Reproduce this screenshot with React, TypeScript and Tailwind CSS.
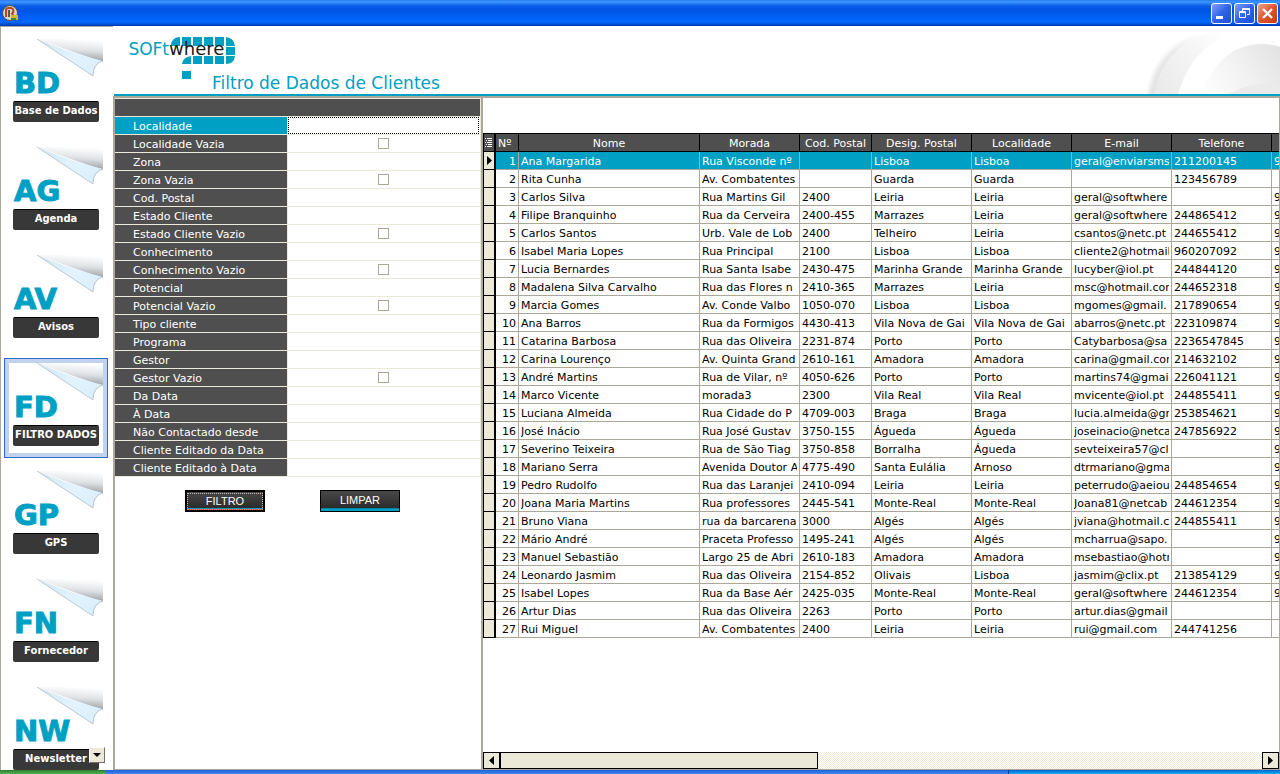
import React from "react";

const NAV = [
  { code: "BD", label: "Base de Dados" },
  { code: "AG", label: "Agenda" },
  { code: "AV", label: "Avisos" },
  { code: "FD", label: "FILTRO DADOS", active: true },
  { code: "GP", label: "GPS" },
  { code: "FN", label: "Fornecedor" },
  { code: "NW", label: "Newsletter" },
];

const FILTERS: { label: string; check?: boolean }[] = [
  { label: "Localidade" },
  { label: "Localidade Vazia", check: true },
  { label: "Zona" },
  { label: "Zona Vazia", check: true },
  { label: "Cod. Postal" },
  { label: "Estado Cliente" },
  { label: "Estado Cliente Vazio", check: true },
  { label: "Conhecimento" },
  { label: "Conhecimento Vazio", check: true },
  { label: "Potencial" },
  { label: "Potencial Vazio", check: true },
  { label: "Tipo cliente" },
  { label: "Programa" },
  { label: "Gestor" },
  { label: "Gestor Vazio", check: true },
  { label: "Da Data" },
  { label: "À Data" },
  { label: "Não Contactado desde" },
  { label: "Cliente Editado da Data" },
  { label: "Cliente Editado à Data" },
];

const COLUMNS = ["Nome", "Morada", "Cod. Postal", "Desig. Postal", "Localidade", "E-mail", "Telefone", ""];

const CLIENTS: string[][] = [
  ["Ana Margarida", "Rua Visconde nº", "", "Lisboa", "Lisboa", "geral@enviarsms", "211200145", "9"],
  ["Rita Cunha", "Av. Combatentes", "", "Guarda", "Guarda", "", "123456789", ""],
  ["Carlos Silva", "Rua Martins Gil", "2400", "Leiria", "Leiria", "geral@softwhere", "", "9"],
  ["Filipe Branquinho", "Rua da Cerveira", "2400-455", "Marrazes", "Leiria", "geral@softwhere", "244865412", "9"],
  ["Carlos Santos", "Urb. Vale de Lob", "2400", "Telheiro", "Leiria", "csantos@netc.pt", "244655412", "9"],
  ["Isabel Maria Lopes", "Rua Principal", "2100", "Lisboa", "Lisboa", "cliente2@hotmail", "960207092", "9"],
  ["Lucia Bernardes", "Rua Santa Isabe", "2430-475", "Marinha Grande", "Marinha Grande", "lucyber@iol.pt", "244844120", "9"],
  ["Madalena Silva Carvalho", "Rua das Flores n", "2410-365", "Marrazes", "Leiria", "msc@hotmail.com", "244652318", "9"],
  ["Marcia Gomes", "Av. Conde Valbo", "1050-070", "Lisboa", "Lisboa", "mgomes@gmail.", "217890654", "9"],
  ["Ana Barros", "Rua da Formigos", "4430-413", "Vila Nova de Gai", "Vila Nova de Gai", "abarros@netc.pt", "223109874", "9"],
  ["Catarina Barbosa", "Rua das Oliveira", "2231-874", "Porto", "Porto", "Catybarbosa@sa", "2236547845", "9"],
  ["Carina Lourenço", "Av. Quinta Grand", "2610-161", "Amadora", "Amadora", "carina@gmail.com", "214632102", "9"],
  ["André Martins", "Rua de Vilar, nº", "4050-626", "Porto", "Porto", "martins74@gmai", "226041121", "9"],
  ["Marco Vicente", "morada3", "2300", "Vila Real", "Vila Real", "mvicente@iol.pt", "244855411", "9"],
  ["Luciana Almeida", "Rua Cidade do P", "4709-003", "Braga", "Braga", "lucia.almeida@gm", "253854621", "9"],
  ["José Inácio", "Rua José Gustav", "3750-155", "Águeda", "Águeda", "joseinacio@netca", "247856922", "9"],
  ["Severino Teixeira", "Rua de São Tiag", "3750-858", "Borralha", "Águeda", "sevteixeira57@cl", "", "9"],
  ["Mariano Serra", "Avenida Doutor A", "4775-490", "Santa Eulália", "Arnoso", "dtrmariano@gma", "", "9"],
  ["Pedro Rudolfo", "Rua das Laranjei", "2410-094", "Leiria", "Leiria", "peterrudo@aeiou", "244854654", "9"],
  ["Joana Maria Martins", "Rua professores", "2445-541", "Monte-Real", "Monte-Real", "Joana81@netcab", "244612354", "9"],
  ["Bruno Viana", "rua da barcarena", "3000", "Algés", "Algés", "jviana@hotmail.c", "244855411", "9"],
  ["Mário André", "Praceta Professo", "1495-241", "Algés", "Algés", "mcharrua@sapo.", "", "9"],
  ["Manuel Sebastião", "Largo 25 de Abri", "2610-183", "Amadora", "Amadora", "msebastiao@hotm", "", "9"],
  ["Leonardo Jasmim", "Rua das Oliveira", "2154-852", "Olivais", "Lisboa", "jasmim@clix.pt", "213854129", "9"],
  ["Isabel Lopes", "Rua da Base Aér", "2425-035", "Monte-Real", "Monte-Real", "geral@softwhere", "244612354", "9"],
  ["Artur Dias", "Rua das Oliveira", "2263", "Porto", "Porto", "artur.dias@gmail", "", ""],
  ["Rui Miguel", "Av. Combatentes", "2400", "Leiria", "Leiria", "rui@gmail.com", "244741256", ""],
];

function AppIcon() {
  return (
    <svg width="18" height="18" viewBox="0 0 18 18" aria-hidden="true">
      <circle cx="9" cy="9" r="7.5" fill="#d8d4cc" stroke="#55504c" />
      <path d="M5 13V5.5A2.5 2.5 0 0 1 7.5 4h2.5a3 3 0 0 1 1 5.500L13.500 13" fill="none" stroke="#b5481c" strokeWidth="2" />
      <path d="M8 6v7" stroke="#3a2a22" strokeWidth="1.500" />
      <rect x="10" y="11" width="7" height="5" fill="#d9b52c" />
      <rect x="10" y="14" width="5" height="2" fill="#3d8a3a" />
    </svg>
  );
}

function TitleBar() {
  const base = "flex size-[21px] items-center justify-center rounded-[3px] border border-white";
  const blue = "bg-linear-to-br from-[#7f9ff5] via-[#2f62e8] to-[#1c4fd8]";
  return (
    <header className="flex h-[26px] shrink-0 items-center justify-between bg-[linear-gradient(180deg,#2a7cf5_0,#3d95ff_2px,#0a5ce8_6px,#0054e3_10px,#0062f8_18px,#0668ff_22px,#0045c8_25px,#0038b0_26px)] pr-0.5 pl-px">
      <AppIcon />
      <div className="flex gap-0.5">
        <button aria-label="Minimizar" className={`${base} ${blue}`}>
          <svg width="19" height="19" viewBox="0 0 19 19">
            <rect x="4" y="12" width="7" height="3" fill="#fff" />
          </svg>
        </button>
        <button aria-label="Restaurar" className={`${base} ${blue}`}>
          <svg width="19" height="19" viewBox="0 0 19 19" fill="none" stroke="#fff">
            <path d="M7.500 7V4.500h7v6h-2.500M7 5.500h8" />
            <path d="M4.500 7.500h6v6h-6zM4 8.500h7" />
          </svg>
        </button>
        <button aria-label="Fechar" className={`${base} bg-linear-to-br from-[#f0a088] via-[#e0522c] to-[#cc3a10]`}>
          <svg width="19" height="19" viewBox="0 0 19 19">
            <path d="M5 5l9 9M14 5l-9 9" stroke="#fff" strokeWidth="2.300" />
          </svg>
        </button>
      </div>
    </header>
  );
}

function PageFold() {
  return (
    <svg className="absolute top-0 right-0" width="67" height="38" viewBox="0 0 67 38" aria-hidden="true">
      <defs>
        <linearGradient id="foldShade" x1="0.600" y1="0" x2="0.400" y2="1">
          <stop offset="0" stopColor="#ffffff" />
          <stop offset="0.450" stopColor="#dfe2e5" />
          <stop offset="0.800" stopColor="#a9aeb3" />
        </linearGradient>
        <linearGradient id="foldPaper" x1="0" y1="0" x2="1" y2="1">
          <stop offset="0" stopColor="#cfe6f2" />
          <stop offset="0.500" stopColor="#e2f3fd" />
          <stop offset="1" stopColor="#d8eefb" />
        </linearGradient>
      </defs>
      <path d="M1 0H67V23Q40 14 1 0Z" fill="url(#foldShade)" />
      <path d="M1 0Q34 14 67 22Q58 25 57 37Z" fill="url(#foldPaper)" />
      <path d="M1 0L57 37Q57 25 66 22" fill="none" stroke="#a8b4bc" strokeWidth="0.700" />
    </svg>
  );
}

function Sidebar() {
  return (
    <nav className="relative w-[113px] shrink-0 overflow-hidden border-t border-l border-[#aca899] bg-white">
      <ul className="flex flex-col gap-2 pt-[7px] pr-[5px] pl-[3px]">
        {NAV.map((item) => (
          <li key={item.code}>
            <a
              href={`#${item.code}`}
              className={`block h-[100px] border p-1 ${item.active ? "border-[#316ac5] bg-[#c1d2ee]" : "border-transparent"}`}
            >
              <span className="relative flex h-[90px] flex-col bg-white px-1 pt-7">
                <PageFold />
                <span className="relative h-[34px] pl-px font-['DejaVu_Sans'] text-[29px] leading-[33px] font-bold text-[#00a0c4] [-webkit-text-stroke:1px_#00a0c4]">
                  {item.code}
                </span>
                <span className="relative flex h-[21px] justify-center rounded-[2px] border-t border-black bg-[#383838] font-['DejaVu_Sans'] text-[10px] leading-[17px] font-bold whitespace-nowrap text-white">
                  {item.label}
                </span>
              </span>
            </a>
          </li>
        ))}
      </ul>
      <button
        aria-label="Mais"
        className="absolute right-2 bottom-[7px] flex size-4 items-center justify-center border border-t-white border-r-[#716f64] border-b-[#716f64] border-l-white bg-[#ece9d8]"
      >
        <svg width="8" height="4" viewBox="0 0 8 4">
          <path d="M0 0h8L4 4z" />
        </svg>
      </button>
    </nav>
  );
}

function Logo() {
  return (
    <svg width="120" height="50" viewBox="0 0 120 50" role="img" aria-label="softwhere">
      <g fill="#00a0c4">
        <path d="M49 9V8Q50 0 58 0V9Z" />
        <path d="M60 0h9v9h-9zM71 0h9v9h-9zM82 0h9v9h-9zM93 0h9v9h-9z" />
        <path d="M104 0Q112 1 113 9H104Z" />
        <path d="M104 10h9v8h-9z" />
        <path d="M60 27Q61 20 69 19V27Z" />
        <path d="M71 19h9v8h-9zM82 19h9v8h-9zM93 19h9v8h-9z" />
        <path d="M104 19h9Q112 27 104 27Z" />
        <path d="M60 34h9v8h-9z" />
      </g>
      <text x="47" y="18" textAnchor="end" fontFamily="DejaVu Sans" fontSize="17" fill="#00a0c4">
        SOFt
      </text>
      <text x="47" y="18" fontFamily="DejaVu Sans" fontSize="18" fill="#1a1a1a">
        where
      </text>
    </svg>
  );
}

function Arcs() {
  return (
    <svg width="140" height="67" viewBox="0 0 140 67" aria-hidden="true">
      <defs>
        <linearGradient id="arcOuter" gradientUnits="userSpaceOnUse" x1="3" y1="67" x2="60" y2="0">
          <stop offset="0" stopColor="#e2e2e2" />
          <stop offset="0.600" stopColor="#e8e8e8" />
          <stop offset="1" stopColor="#ffffff" />
        </linearGradient>
        <linearGradient id="arcMid" gradientUnits="userSpaceOnUse" x1="15" y1="67" x2="85" y2="5">
          <stop offset="0" stopColor="#e9e9e9" />
          <stop offset="0.500" stopColor="#f3f3f3" />
          <stop offset="1" stopColor="#ffffff" />
        </linearGradient>
        <linearGradient id="arcInner" gradientUnits="userSpaceOnUse" x1="62" y1="67" x2="140" y2="20">
          <stop offset="0" stopColor="#ffffff" />
          <stop offset="0.600" stopColor="#efefef" />
          <stop offset="1" stopColor="#e2e2e2" />
        </linearGradient>
        <filter id="arcSoft">
          <feGaussianBlur stdDeviation="2" />
        </filter>
      </defs>
      <path d="M8 70Q14 22 60 7V70Z" fill="url(#arcOuter)" filter="url(#arcSoft)" />
      <path d="M15 67C21 36 38 14 72 5H100V67Z" fill="#ffffff" />
      <path d="M15 67C21 36 38 14 72 5H98V67Z" fill="url(#arcMid)" />
      <path d="M38 67C48 34 66 14 96 6Q120 2 140 10V67Z" fill="#ffffff" />
      <path d="M60 67Q82 17 120 17Q132 17 140 20V67Z" fill="url(#arcInner)" />
      <path d="M88 67Q112 54 140 57V67Z" fill="#ebebeb" />
    </svg>
  );
}

function PageHeader() {
  return (
    <div className="ml-px flex h-[70px] shrink-0 items-end justify-between border-b-2 border-[#00a0c4] bg-white">
      <div className="flex items-end">
        <div className="-mr-[30px] pb-[7px] pl-2">
          <Logo />
        </div>
        <h1 className="pb-[3px] font-['DejaVu_Sans'] text-[17px] leading-4 font-normal text-[#00a0c4]">
          Filtro de Dados de Clientes
        </h1>
      </div>
      <Arcs />
    </div>
  );
}

function FilterPanel() {
  return (
    <section className="w-[370px] shrink-0 border-x-2 border-[#aca899] bg-white">
      <form onSubmit={(e) => e.preventDefault()}>
        <div className="border border-l-0 border-[#ece9d8]">
          <div className="h-[17px] bg-[#4f4f4f]" />
          {FILTERS.map((f, i) => {
            const id = `filtro-${i}`;
            return (
              <div key={id} className="flex h-[18px] border-t border-[#ece9d8]">
                <label
                  htmlFor={id}
                  className={`h-[17px] w-[172px] shrink-0 pl-[18px] leading-[19px] whitespace-nowrap text-white ${i === 0 ? "bg-[#00a0c4]" : "bg-[#4f4f4f]"}`}
                >
                  {f.label}
                </label>
                <div className="flex min-w-0 flex-1 items-center justify-center border-l border-[#ece9d8] pr-px">
                  {f.check ? (
                    <input id={id} type="checkbox" className="size-[11px] appearance-none border border-[#aca899] bg-white" />
                  ) : (
                    <input
                      id={id}
                      type="text"
                      className={`h-full w-full bg-transparent px-1 outline-none ${i === 0 ? "border border-dotted border-black" : ""}`}
                    />
                  )}
                </div>
              </div>
            );
          })}
        </div>
        <div className="flex gap-[55px] pt-[13px] pl-[70px] font-['Liberation_Sans'] text-[11px] text-white">
          <button
            type="submit"
            className="h-[22px] w-20 border-2 border-black bg-[linear-gradient(180deg,#484848_0,#2b2b2b_16px,#00a0c4_16px)] leading-4"
          >
            <span className="flex h-[17px] items-center justify-center border border-dotted border-[#c8b8b0] border-b-[#ff7a58]">
              FILTRO
            </span>
          </button>
          <button
            type="reset"
            className="h-[22px] w-20 border border-black bg-[linear-gradient(180deg,#484848_0,#2b2b2b_17px,#006e88_17px,#00a0c4_18px)] pb-0.5 leading-4"
          >
            LIMPAR
          </button>
        </div>
      </form>
    </section>
  );
}

function ClientTable() {
  return (
    <table className="w-full table-fixed border-separate border-spacing-0 text-black">
      <colgroup>
        <col className="w-[13px]" />
        <col className="w-[23px]" />
        <col className="w-[181px]" />
        <col className="w-[100px]" />
        <col className="w-[72px]" />
        <col className="w-[100px]" />
        <col className="w-[100px]" />
        <col className="w-[100px]" />
        <col className="w-[100px]" />
        <col />
      </colgroup>
      <thead>
        <tr className="h-[19px] bg-[#4f4f4f] text-white">
          <th aria-label="Seletor" className="border-y border-r-2 border-l border-black p-0">
            <svg className="mx-auto" width="8" height="9" viewBox="0 0 8 9" shapeRendering="crispEdges">
              <path d="M0 .5h1M2 .5h5M1 2.500h1M3 2.500h4M0 4.500h1M2 4.500h5M1 6.500h1M3 6.500h4M0 8.500h1M2 8.500h5" stroke="#fff" />
            </svg>
          </th>
          <th className="border-y border-r border-black p-0 pl-0.5 text-left font-normal">
            <div className="h-[17px] leading-[19px]">Nº</div>
          </th>
          {COLUMNS.map((c, i) => (
            <th key={i} className="border-y border-r border-black p-0 font-normal whitespace-nowrap last:border-r-0">
              <div className="h-[17px] overflow-hidden leading-[19px]">{c}</div>
            </th>
          ))}
        </tr>
      </thead>
      <tbody>
        {CLIENTS.map((row, i) => (
          <tr key={i} className={`h-[18px] ${i === 0 ? "bg-[#00a0c4] text-white" : "bg-white"}`}>
            <td className="border-r-2 border-b border-l border-black bg-[#ece9d8] p-0">
              {i === 0 && (
                <svg className="mx-auto" width="5" height="9" viewBox="0 0 5 9">
                  <path d="M0 0l5 4.500L0 9z" />
                </svg>
              )}
            </td>
            <td className="border-r border-b border-[#aca899] p-0 pr-0.5 text-right">
              <div className="h-[17px] leading-[19px]">{i + 1}</div>
            </td>
            {row.map((cell, j) => (
              <td key={j} className="border-r border-b border-[#aca899] p-0 px-0.5 last:border-r-0 last:pr-0">
                <div className="h-[17px] overflow-hidden leading-[19px] whitespace-nowrap">{cell}</div>
              </td>
            ))}
          </tr>
        ))}
      </tbody>
    </table>
  );
}

function HorizontalScroll() {
  return (
    <div className="flex h-[17px] shrink-0 bg-[repeating-conic-gradient(#ece9d8_0_25%,#ffffff_0_50%)] bg-size-[2px_2px]">
      <button aria-label="Esquerda" className="flex w-[17px] items-center justify-center border border-black bg-[#ece9d8]">
        <svg width="5" height="9" viewBox="0 0 5 9">
          <path d="M5 0L0 4.500L5 9z" />
        </svg>
      </button>
      <div className="min-w-0 flex-1">
        <div className="h-full w-5/12 border border-black bg-[#ece9d8]" />
      </div>
      <button aria-label="Direita" className="flex w-[17px] items-center justify-center border border-black bg-[#ece9d8]">
        <svg width="5" height="9" viewBox="0 0 5 9">
          <path d="M0 0l5 4.500L0 9z" />
        </svg>
      </button>
    </div>
  );
}

export default function App() {
  return (
    <div className="flex h-screen flex-col overflow-hidden bg-white font-['DejaVu_Sans',sans-serif] text-[11px]">
      <TitleBar />
      <div className="flex min-h-0 flex-1">
        <Sidebar />
        <main className="flex min-w-0 flex-1 flex-col">
          <PageHeader />
          <div className="flex min-h-0 flex-1 border-t-2 border-r border-b border-[#aca899]">
            <FilterPanel />
            <section className="flex min-w-0 flex-1 flex-col bg-white pt-[35px]">
              <div className="min-h-0 flex-1 overflow-hidden">
                <ClientTable />
              </div>
              <HorizontalScroll />
            </section>
          </div>
        </main>
      </div>
      <footer className="flex h-1 shrink-0">
        <div className="w-[106px] bg-linear-to-b from-[#2e7d2e] to-[#52b152]" />
        <div className="flex-1 bg-linear-to-b from-[#1f5fd8] to-[#3f86ee]" />
        <div className="w-[272px] border-l border-[#0a3a98] bg-linear-to-b from-[#0a5fd0] to-[#18b4f4]" />
      </footer>
    </div>
  );
}
